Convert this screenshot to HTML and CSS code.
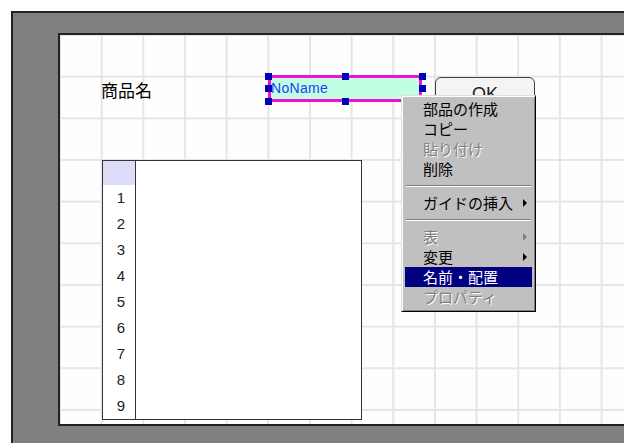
FILE: index.html
```html
<!DOCTYPE html>
<html>
<head>
    <title>Form Designer</title>
    <link rel="stylesheet" href="styles.css">
</head>
<body>
    <div class="desk">
        <div class="sheet">
            <div class="label">商品名</div>

            <div class="field">
                <span class="field-text">NoName</span>
                <span class="handle h-tl"></span>
                <span class="handle h-tm"></span>
                <span class="handle h-tr"></span>
                <span class="handle h-ml"></span>
                <span class="handle h-mr"></span>
                <span class="handle h-bl"></span>
                <span class="handle h-bm"></span>
                <span class="handle h-br"></span>
            </div>

            <div class="ok-button"><span class="ok-text">OK</span></div>

            <div class="grid-table">
                <div class="row-heads">
                    <div class="corner"></div>
                    <div class="num">1</div>
                    <div class="num">2</div>
                    <div class="num">3</div>
                    <div class="num">4</div>
                    <div class="num">5</div>
                    <div class="num">6</div>
                    <div class="num">7</div>
                    <div class="num">8</div>
                    <div class="num">9</div>
                </div>
            </div>

            <div class="menu">
                <div class="item">部品の作成</div>
                <div class="item">コピー</div>
                <div class="item off">貼り付け</div>
                <div class="item">削除</div>
                <div class="sep"></div>
                <div class="item sub">ガイドの挿入</div>
                <div class="sep"></div>
                <div class="item off sub">表</div>
                <div class="item sub">変更</div>
                <div class="item on">名前・配置</div>
                <div class="item off">プロパティ</div>
            </div>
        </div>
    </div>
</body>
</html>
```

FILE: styles.css
```css
html, body {
    margin: 0;
    height: 100%;
    overflow: hidden;
    background: #ffffff;
}
body {
    font-family: "Noto Sans CJK JP", "Liberation Sans", sans-serif;
}
.desk {
    box-sizing: border-box;
    margin: 11px 0 0 11px;
    height: calc(100% - 11px);
    border-top: 2px solid #222;
    border-left: 2px solid #222;
    background: #808080;
    padding: 20px 0 0 45px;
    overflow: hidden;
}
.sheet {
    position: relative;
    height: 389px;
    border: 2px solid #222;
    border-right: none;
    background-color: #fefefe;
    background-image:
        linear-gradient(to right, transparent 39.667px, #e6e6e6 39.667px),
        linear-gradient(to bottom, transparent 39.667px, #e6e6e6 39.667px);
    background-size: 41.667px 41.667px;
    background-position: 1px 1px;
}
.label {
    position: absolute;
    left: 41px;
    top: 45px;
    font-size: 17px;
    line-height: 20px;
    color: #000;
}
.field {
    position: absolute;
    left: 208px;
    top: 40px;
    width: 154px;
    height: 27px;
    box-sizing: border-box;
    border: 3px solid #f010d8;
    background: #c0ffe0;
}
.field-text {
    display: block;
    font-family: "Liberation Sans", Arial, sans-serif;
    font-size: 14px;
    letter-spacing: 0.3px;
    line-height: 21px;
    color: #2040ff;
}
.handle {
    position: absolute;
    width: 7px;
    height: 7px;
    background: #0000b8;
}
.h-tl { left: -6px; top: -5px; }
.h-tm { left: 71px; top: -5px; }
.h-tr { left: 148px; top: -5px; }
.h-ml { left: -6px; top: 7px; }
.h-mr { left: 148px; top: 7px; }
.h-bl { left: -6px; top: 20px; }
.h-bm { left: 71px; top: 20px; }
.h-br { left: 148px; top: 20px; }
.ok-button {
    position: absolute;
    left: 375px;
    top: 42px;
    width: 100px;
    height: 40px;
    box-sizing: border-box;
    border: 1px solid #404040;
    border-radius: 6px;
    background: #f4f4f4;
    overflow: hidden;
}
.ok-text {
    display: block;
    height: 17px;
    padding-top: 2px;
    overflow: hidden;
    font-family: "Liberation Sans", Arial, sans-serif;
    font-size: 18px;
    line-height: 28px;
    text-align: center;
    color: #222;
}
.grid-table {
    position: absolute;
    left: 42px;
    top: 125px;
    width: 260px;
    height: 260px;
    box-sizing: border-box;
    border: 1px solid #333;
    background: #fff;
}
.row-heads {
    width: 32px;
    height: 100%;
    border-right: 1px solid #333;
}
.corner {
    height: 24px;
    background: #dcdcf8;
}
.num {
    height: 26px;
    line-height: 26px;
    padding-right: 10px;
    text-align: right;
    font-family: "Liberation Sans", Arial, sans-serif;
    font-size: 15px;
    color: #222;
}
.menu {
    position: absolute;
    left: 341px;
    top: 60px;
    width: 135px;
    box-sizing: border-box;
    padding: 3px 3px 4px 3px;
    border: 1px solid;
    border-color: #e0e0e0 #000 #000 #e0e0e0;
    box-shadow: inset 1px 1px #fff, inset -1px -1px #808080;
    background: #c0c0c0;
}
.item {
    position: relative;
    height: 20px;
    line-height: 20px;
    padding-left: 18px;
    font-size: 15px;
    color: #000;
}
.item.off {
    color: #808080;
    text-shadow: 1px 1px 0 #fff;
}
.item.on {
    background: #000080;
    color: #fff;
}
.item.sub::after {
    content: "";
    position: absolute;
    right: 5px;
    top: 6px;
    border-left: 4px solid #000;
    border-top: 4px solid transparent;
    border-bottom: 4px solid transparent;
}
.item.off.sub::after {
    border-left-color: #808080;
}
.sep {
    height: 0;
    margin: 6px 1px 6px 1px;
    border-top: 1px solid #808080;
    border-bottom: 1px solid #fff;
}
```
